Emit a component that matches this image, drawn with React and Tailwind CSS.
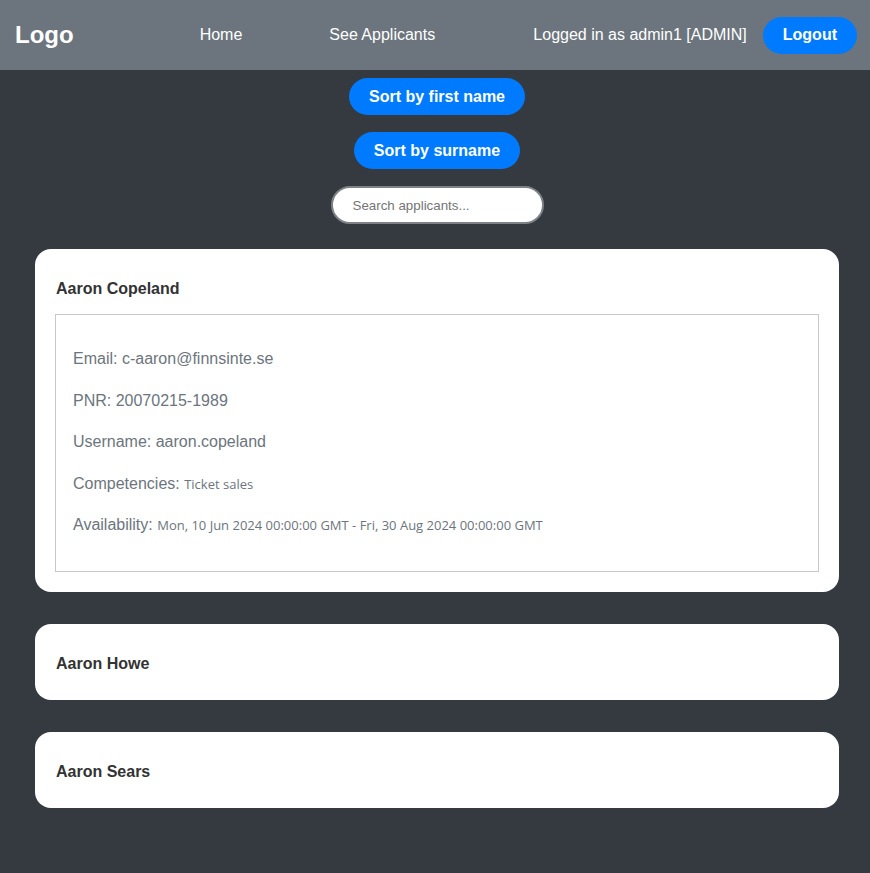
import React, { useState } from 'react';

const applicants = [
    {
        id: 1,
        name: 'Aaron Copeland',
        email: 'c-aaron@finnsinte.se',
        pnr: '20070215-1989',
        username: 'aaron.copeland',
        competencies: 'Ticket sales',
        availability: 'Mon, 10 Jun 2024 00:00:00 GMT - Fri, 30 Aug 2024 00:00:00 GMT',
    },
    { id: 2, name: 'Aaron Howe' },
    { id: 3, name: 'Aaron Sears' },
];

const App = () => {
    const [open, setOpen] = useState(1);
    const [query, setQuery] = useState('');

    return (
        <div className="min-h-[873px] bg-[#343a40] font-['Liberation_Sans',Arial,sans-serif] pb-10">
            <header className="h-[70px] bg-[#6c757d] flex items-center pl-[15px] pr-[13px] text-white">
                <span className="text-[24px] font-bold leading-none">Logo</span>
                <nav className="flex items-center ml-[126px] gap-[87px] text-[16px]">
                    <a href="#" className="text-white">Home</a>
                    <a href="#" className="text-white">See Applicants</a>
                </nav>
                <div className="ml-auto flex items-center gap-4">
                    <span className="text-[16px]">Logged in as admin1 [ADMIN]</span>
                    <button className="h-[37px] px-5 rounded-full bg-[#007bff] text-white font-bold text-[16px]">Logout</button>
                </div>
            </header>

            <div className="flex flex-col items-center pt-2 pl-1">
                <button className="h-[37px] px-5 rounded-full bg-[#007bff] text-white font-bold text-[16px]">Sort by first name</button>
                <button className="h-[37px] px-5 mt-[17px] rounded-full bg-[#007bff] text-white font-bold text-[16px]">Sort by surname</button>
                <input
                    value={query}
                    onChange={e => setQuery(e.target.value)}
                    placeholder="Search applicants..."
                    className="mt-[17px] w-[213px] h-[38px] pl-5 pr-3 rounded-full border-2 border-[#7d8288] bg-white text-[13.33px] text-[#333] placeholder:text-[#757575] outline-none"
                />
            </div>

            <div className="pl-[35px] pr-[31px] mt-[25px] flex flex-col gap-8">
                {applicants.map(a => (
                    <div key={a.id} className="bg-white rounded-2xl p-5 cursor-pointer" onClick={() => setOpen(open === a.id ? null : a.id)}>
                        <h3 className="pl-px pt-[11px] pb-[7px] leading-[18px] text-[16px] font-bold text-[#333]">{a.name}</h3>
                        {open === a.id && a.email && (
                            <div className="mt-[9px] border border-[#c8c8c8] pl-[17px] pt-8 pb-[34px] flex flex-col gap-[17.5px] text-[16px] leading-6 text-[#6c757d]">
                                <p>Email: {a.email}</p>
                                <p>PNR: {a.pnr}</p>
                                <p>Username: {a.username}</p>
                                <p>Competencies: <span className="font-['Open_Sans',sans-serif] text-[13px]">{a.competencies}</span></p>
                                <p>Availability: <span className="font-['Open_Sans',sans-serif] text-[13px]">{a.availability}</span></p>
                            </div>
                        )}
                    </div>
                ))}
            </div>
        </div>
    );
};

export default App;
